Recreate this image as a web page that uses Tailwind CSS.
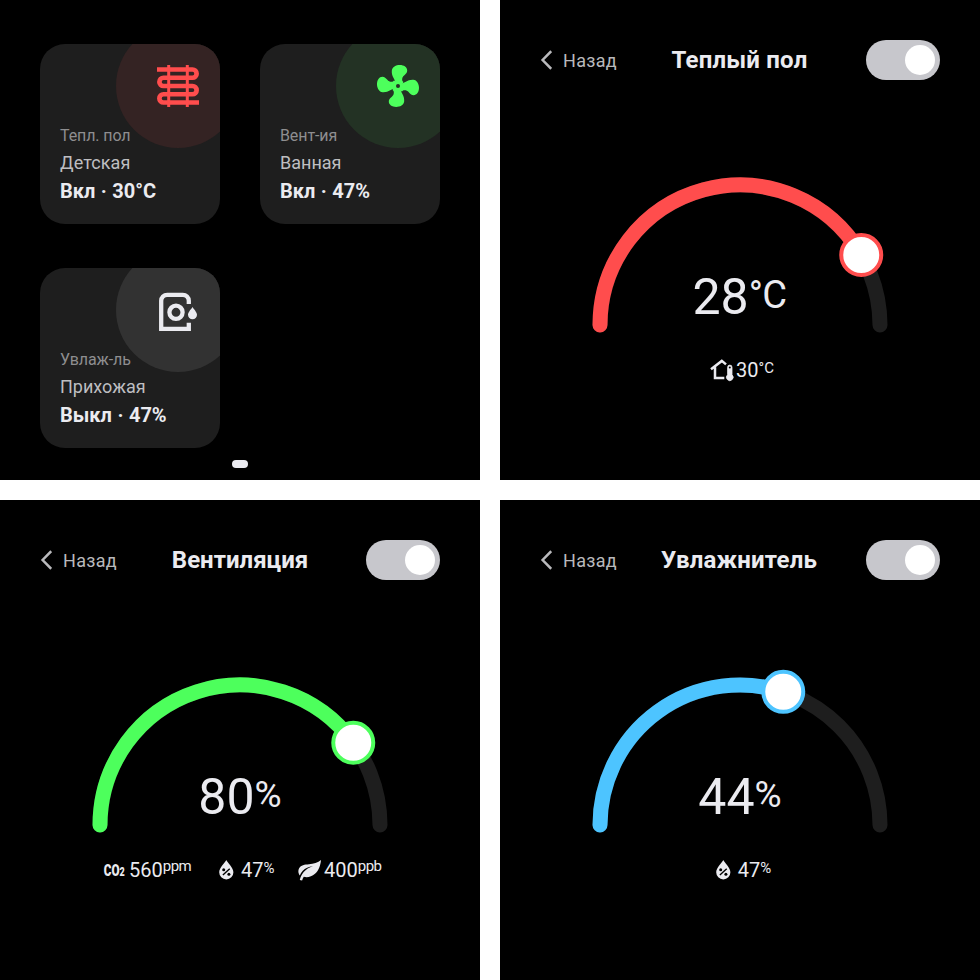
<!DOCTYPE html>
<html lang="ru">
<head>
<meta charset="utf-8">
<title>Климат</title>
<script src="https://cdn.jsdelivr.net/npm/@tailwindcss/browser@4"></script>
</head>
<body class="w-[980px] h-[980px] overflow-hidden bg-white text-[#ebebf0] font-[Roboto,sans-serif]">
<svg class="hidden">
  <symbol id="back" viewBox="0 0 12 20"><path d="M11.200 1.200 2.600 10 11.200 18.800" fill="none" stroke="currentColor" stroke-width="2.500"/></symbol>
  <symbol id="drop" viewBox="0 0 16 20">
    <path d="M8.300 0C9.300 2 15.400 8 15.400 12.300A7.100 7.100 0 0 1 1.200 12.300C1.200 8 7.300 2 8.300 0Z" fill="currentColor"/>
    <path d="M4.900 15 11.700 8.800" stroke="#000" stroke-width="1.400"/>
    <circle cx="5.700" cy="9.700" r="1.500"/><circle cx="10.900" cy="14.300" r="1.500"/>
  </symbol>
</svg>
<main class="grid grid-cols-[480px_480px] grid-rows-[480px_480px] gap-5">

  <section class="relative bg-black px-10 pt-11">
    <div class="grid grid-cols-[180px_180px] gap-x-10 gap-y-11">
      <article class="relative h-[180px] overflow-hidden rounded-[25px] bg-[#1e1e1e] flex flex-col justify-end px-5 pb-[19px]">
        <div class="absolute left-[76px] -top-5 size-[124px] rounded-full bg-[#342323] flex items-center justify-center text-[#ff4d4d]">
          <svg class="size-[42px]" viewBox="0 0 42 42" fill="none" stroke="currentColor"><path stroke-width="4.700" d="M0 4.500H35.500a4.120 4.120 0 0 1 0 8.250H6.500a4.120 4.120 0 0 0 0 8.250H35.500a4.120 4.120 0 0 1 0 8.250H6.500a4.120 4.120 0 0 0 0 8.250H42"/><path stroke-width="3" d="M11.700 0V42M30.300 0V42"/></svg>
        </div>
        <p class="relative text-base leading-7 tracking-[-0.1px] text-[#8e8e90]">Тепл. пол</p>
        <p class="relative -mt-px text-[18px] leading-7 tracking-[0.1px] text-[#bebec1]">Детская</p>
        <p class="relative text-xl leading-7 font-bold [word-spacing:0.5px]">Вкл · 30°C</p>
      </article>
      <article class="relative h-[180px] overflow-hidden rounded-[25px] bg-[#1e1e1e] flex flex-col justify-end px-5 pb-[19px]">
        <div class="absolute left-[76px] -top-5 size-[124px] rounded-full bg-[#233224] flex items-center justify-center text-[#4dff5c]">
          <svg class="size-[42px]" viewBox="-21 -21 42 42" fill="currentColor"><defs><path id="blade" d="M-2.200-1.500C-2.400-4-3.200-5.500-4.300-7.800C-5.600-10-6.400-12.500-6.200-15.300C-5.900-19-2-21 1.800-21C6-21 9.200-18.800 9.200-15.600C9.200-11.700 4.900-11 4.300-7.700C3.900-5.900 4.200-5 5.400-4L3.500 0L0 3Z"/></defs>
            <use href="#blade"/><use href="#blade" transform="rotate(90)"/><use href="#blade" transform="rotate(180)"/><use href="#blade" transform="rotate(270)"/><circle r="2" fill="#233224"/></svg>
        </div>
        <p class="relative text-base leading-7 tracking-[-0.1px] text-[#8e8e90]">Вент-ия</p>
        <p class="relative -mt-px text-[18px] leading-7 text-[#bebec1]">Ванная</p>
        <p class="relative text-xl leading-7 font-bold [word-spacing:0.5px]">Вкл · 47%</p>
      </article>
      <article class="relative h-[180px] overflow-hidden rounded-[25px] bg-[#1e1e1e] flex flex-col justify-end px-5 pb-[19px]">
        <div class="absolute left-[76px] -top-5 size-[124px] rounded-full bg-[#323232] flex items-center justify-center">
          <svg class="size-[42px]" viewBox="0 0 42 42" fill="none" stroke="currentColor" stroke-width="4.300"><path d="M31.800 15V11.800a6 6 0 0 0-6-6H10.200a6 6 0 0 0-6 6V39.800H31.800V33.700"/><circle cx="19" cy="23.300" r="6.600"/><path stroke="none" fill="currentColor" d="M35.500 18C36.500 20 40 23 40 25.800a4.500 4.500 0 0 1-9 0C31 23 34.500 20 35.500 18Z"/></svg>
        </div>
        <p class="relative text-base leading-7 tracking-[-0.1px] text-[#8e8e90]">Увлаж-ль</p>
        <p class="relative -mt-px text-[18px] leading-7 text-[#bebec1]">Прихожая</p>
        <p class="relative text-xl leading-7 font-bold [word-spacing:0.5px]">Выкл · 47%</p>
      </article>
    </div>
    <div class="mx-auto mt-3 w-4 h-2 rounded-full bg-[#ebebf0]"></div>
  </section>

  <section class="bg-black pt-10">
    <header class="grid grid-cols-[90px_1fr_90px] items-center h-10 px-10">
      <div class="flex items-center gap-[11px] text-[18px] tracking-[0.3px] text-[#b9b9bc]"><svg class="w-3 h-5 shrink-0"><use href="#back"/></svg><span>Назад</span></div>
      <h2 class="text-center text-2xl font-bold tracking-[0.2px] pr-px">Теплый пол</h2>
      <div class="justify-self-end w-[74px] h-10 p-[5px] rounded-full bg-[#c7c7cc] flex justify-end"><i class="size-[30px] rounded-full bg-white"></i></div>
    </header>
    <div class="relative h-[260px]">
      <svg class="w-[480px] h-[260px]" viewBox="0 80 480 260" fill="none" stroke-width="15" stroke-linecap="round"><path stroke="#1e1e1e" d="M100 325A140 140 0 0 1 380 325"/><path stroke="#ff4d4d" d="M100 325A140 140 0 0 1 361.240 255"/><circle cx="361.240" cy="255" r="20" fill="#fff" stroke="#ff4d4d" stroke-width="4"/></svg>
      <div class="absolute inset-x-0 top-[187px] flex justify-center items-start leading-none pr-px"><span class="text-[50px] leading-[60px]">28</span><span class="text-[38px] leading-[56px] tracking-[-0.5px]">°C</span></div>
    </div>
    <div class="flex justify-center items-center h-[60px] pl-1">
      <svg class="w-[24px] h-6 mr-[2px]" viewBox="0 0 24 24" fill="none" stroke="currentColor" stroke-width="2.500"><path d="M1 11.300 11.800 2.900 16 6.400M5 9.300V20.100H14.300"/><path d="M17.600 9.300a2.200 2.200 0 0 1 4.400 0V16.800a3.300 3.300 0 1 1-4.400 0Z" fill="currentColor" stroke-width=".8"/><circle cx="19.800" cy="9.400" r="1" fill="#000" stroke="none"/></svg>
      <span class="flex items-start text-xl leading-6">30<sup class="static text-[15px] leading-5">°C</sup></span>
    </div>
  </section>

  <section class="bg-black pt-10">
    <header class="grid grid-cols-[90px_1fr_90px] items-center h-10 px-10">
      <div class="flex items-center gap-[11px] text-[18px] tracking-[0.3px] text-[#b9b9bc]"><svg class="w-3 h-5 shrink-0"><use href="#back"/></svg><span>Назад</span></div>
      <h2 class="text-center text-2xl font-bold">Вентиляция</h2>
      <div class="justify-self-end w-[74px] h-10 p-[5px] rounded-full bg-[#c7c7cc] flex justify-end"><i class="size-[30px] rounded-full bg-white"></i></div>
    </header>
    <div class="relative h-[260px]">
      <svg class="w-[480px] h-[260px]" viewBox="0 80 480 260" fill="none" stroke-width="15" stroke-linecap="round"><path stroke="#1e1e1e" d="M100 325A140 140 0 0 1 380 325"/><path stroke="#4dff5c" d="M100 325A140 140 0 0 1 353.260 242.710"/><circle cx="353.260" cy="242.710" r="20" fill="#fff" stroke="#4dff5c" stroke-width="4"/></svg>
      <div class="absolute inset-x-0 top-[187px] flex justify-center items-start leading-none"><span class="text-[50px] leading-[60px]">80</span><span class="text-[37px] leading-[56px]">%</span></div>
    </div>
    <div class="flex items-center h-[60px] pl-[104px]">
      <div class="flex items-center w-[114px]">
        <svg class="w-[22px] h-6 mr-[3px] overflow-visible" viewBox="0 0 22 24" fill="currentColor" font-family="Roboto" font-weight="900"><text x="-.3" y="18" font-size="17" textLength="21" lengthAdjust="spacingAndGlyphs">CO<tspan font-size="13">2</tspan></text></svg>
        <span class="flex items-start text-xl leading-6">560<sup class="static text-[15px] leading-4 tracking-[-0.5px]">ppm</sup></span>
      </div>
      <div class="flex items-center w-[80px]">
        <svg class="w-4 h-5 mr-[7px]"><use href="#drop"/></svg>
        <span class="flex items-start text-xl leading-6">47<sup class="static text-[15px] leading-5">%</sup></span>
      </div>
      <div class="flex items-center">
        <svg class="w-6 h-6 mr-[2px]" viewBox="0 0 24 24" fill="currentColor"><path d="M23 2C22.500 7 21 12.500 17 15.800C13.500 18.800 9.500 19.700 5.800 18.800C5.200 19.500 4.600 21 4.100 22.600L1.800 22C2.300 19.500 3.600 16.500 5.700 14C8 11.300 11 9.300 15 8.200C10.500 8.500 7.200 10.200 4.800 12.700C3.400 14.200 2.500 15.800 1.900 17.600C.3 15.500-.2 12.600 1.100 10.300C3 7 6.500 6.500 11 6.200C15.500 5.900 20 4.800 23 2Z"/></svg>
        <span class="flex items-start text-xl leading-6">400<sup class="static text-[15px] leading-4 tracking-[-0.5px]">ppb</sup></span>
      </div>
    </div>
  </section>

  <section class="bg-black pt-10">
    <header class="grid grid-cols-[90px_1fr_90px] items-center h-10 px-10">
      <div class="flex items-center gap-[11px] text-[18px] tracking-[0.3px] text-[#b9b9bc]"><svg class="w-3 h-5 shrink-0"><use href="#back"/></svg><span>Назад</span></div>
      <h2 class="text-center text-2xl font-bold tracking-[0.2px] pr-[2px]">Увлажнитель</h2>
      <div class="justify-self-end w-[74px] h-10 p-[5px] rounded-full bg-[#c7c7cc] flex justify-end"><i class="size-[30px] rounded-full bg-white"></i></div>
    </header>
    <div class="relative h-[260px]">
      <svg class="w-[480px] h-[260px]" viewBox="0 80 480 260" fill="none" stroke-width="15" stroke-linecap="round"><path stroke="#1e1e1e" d="M100 325A140 140 0 0 1 380 325"/><path stroke="#4dc4ff" d="M100 325A140 140 0 0 1 283.260 191.850"/><circle cx="283.260" cy="191.850" r="20" fill="#fff" stroke="#4dc4ff" stroke-width="4"/></svg>
      <div class="absolute inset-x-0 top-[187px] flex justify-center items-start leading-none"><span class="text-[50px] leading-[60px]">44</span><span class="text-[37px] leading-[56px]">%</span></div>
    </div>
    <div class="flex justify-center items-center h-[60px] pl-[6px]">
      <svg class="w-4 h-5 mr-[7px]"><use href="#drop"/></svg>
      <span class="flex items-start text-xl leading-6">47<sup class="static text-[15px] leading-5">%</sup></span>
    </div>
  </section>
</main>
</body>
</html>
